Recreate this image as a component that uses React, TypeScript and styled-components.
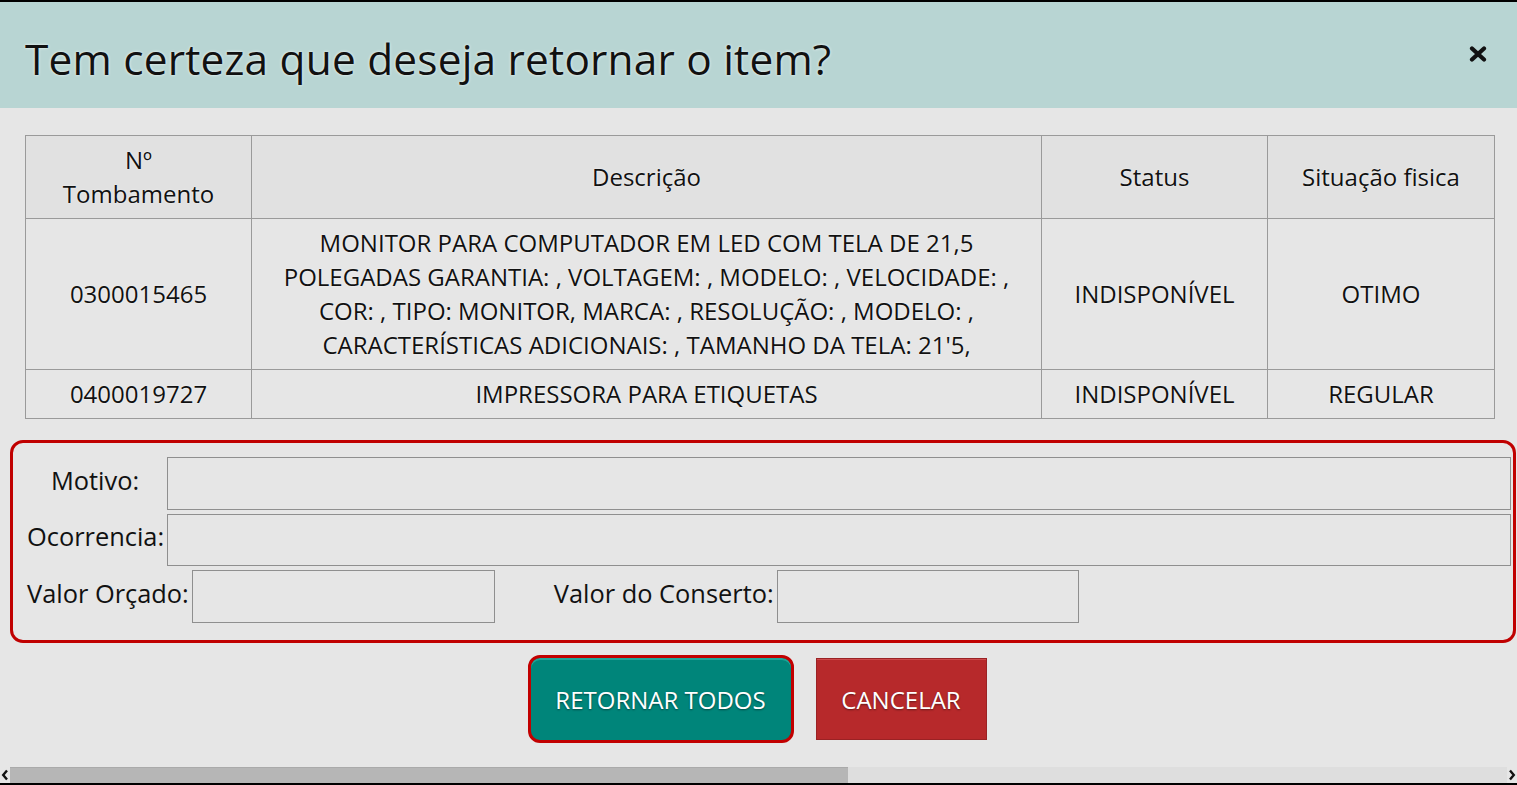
import React from "react";
import styled, { createGlobalStyle } from "styled-components";

const Global = createGlobalStyle`
  html, body { margin: 0; padding: 0; }
  body {
    font-family: "Open Sans", "Noto Sans", "Liberation Sans", sans-serif;
    color: #111;
    background: #e6e6e6;
    overflow: hidden;
  }
  * { box-sizing: border-box; }
`;

const Page = styled.div`
  height: 100vh;
  display: flex;
  flex-direction: column;
  border-top: 2px solid #000;
  border-bottom: 2px solid #000;
  background: #e6e6e6;
`;

const Header = styled.div`
  height: 106px;
  flex: none;
  background: #b8d5d3;
  display: flex;
  align-items: center;
  justify-content: space-between;
  padding: 6px 30px 0 25px;
`;

const Title = styled.h1`
  margin: 0;
  font-size: 42.4px;
  font-weight: 400;
  letter-spacing: 0.2px;
  color: #111;
  text-shadow: 0 0 3px rgba(255, 255, 255, 0.9);
`;

const CloseBtn = styled.button`
  border: 0;
  background: none;
  padding: 0;
  margin-top: -9px;
  width: 18px;
  height: 16px;
  display: flex;
  cursor: pointer;
`;

const Body = styled.div`
  flex: 1;
  display: flex;
  flex-direction: column;
  padding: 27px 1px 0 10px;
`;

const Table = styled.table`
  margin: 0 22px 0 15px;
  border-collapse: collapse;
  table-layout: fixed;
  width: 1469px;
  font-size: 24px;
  line-height: 34px;
`;

const Th = styled.th<{ $w: number }>`
  width: ${(p) => p.$w}px;
  border: 1px solid #9a9a9a;
  background: #e1e1e1;
  font-weight: 400;
  padding: 7px 8px;
  text-align: center;
  vertical-align: middle;
  text-shadow: 0 0 2px rgba(255, 255, 255, 0.8);
`;

const Td = styled.td`
  border: 1px solid #9a9a9a;
  padding: 7px 8px;
  text-align: center;
  vertical-align: middle;
  text-shadow: 0 0 2px rgba(255, 255, 255, 0.8);
`;

const FormBox = styled.div`
  margin-top: 21px;
  border: 3px solid #c00000;
  border-radius: 13px;
  padding: 14px 2px 17px 14px;
  display: flex;
  flex-direction: column;
  gap: 4px;
  font-size: 25.4px;
`;

const WideRow = styled.div`
  display: grid;
  grid-template-columns: 140px 1fr;
  align-items: center;
`;

const CenterLabel = styled.label`
  text-align: center;
  padding: 0 4px 8px 0;
  white-space: nowrap;
`;

const Field = styled.input<{ $w?: number; $h: number }>`
  display: block;
  width: ${(p) => (p.$w ? `${p.$w}px` : "100%")};
  height: ${(p) => p.$h}px;
  border: 1px solid #8f8f8f;
  background: #e6e6e6;
  font: inherit;
  padding: 0 6px;
  outline: none;
`;

const ValueRow = styled.div`
  display: flex;
  align-items: center;
`;

const InlineLabel = styled.label<{ $ml?: number }>`
  margin-left: ${(p) => p.$ml ?? 0}px;
  margin-right: 3px;
  padding-bottom: 8px;
  white-space: nowrap;
`;

const Actions = styled.div`
  display: flex;
  justify-content: center;
  align-items: center;
  gap: 22px;
  margin-top: 12px;
  padding-right: 12px;
`;

const Btn = styled.button<{ $variant: "primary" | "danger" }>`
  font-family: "Open Sans", "Noto Sans", sans-serif;
  font-size: 24px;
  color: #fff;
  text-shadow: 0 1px 2px rgba(0, 0, 0, 0.45);
  cursor: pointer;
  padding: 0;
  ${(p) =>
    p.$variant === "primary"
      ? `
    width: 266px;
    height: 88px;
    background: #00857a;
    border: 3px solid #c20000;
    border-radius: 12px;
    box-shadow: inset 0 2px 0 #1fa69a;
  `
      : `
    width: 171px;
    height: 82px;
    background: #b7292b;
    border: 1px solid #9a2224;
    border-radius: 0;
    box-shadow: inset 0 1px 0 #cd4a4c;
  `}
`;

const Spacer = styled.div`
  flex: 1;
`;

const ScrollBar = styled.div`
  height: 16px;
  flex: none;
  display: flex;
  align-items: stretch;
  background: #dedede;
`;

const Arrow = styled.div`
  width: 10px;
  display: flex;
  align-items: center;
  justify-content: center;
  background: #e6e6e6;
`;

const Thumb = styled.div`
  width: 838px;
  background: #b6b6b6;
  border-top: 1px solid #aaa;
`;

const Track = styled.div`
  flex: 1;
`;

const rows = [
  {
    num: "0300015465",
    desc: "MONITOR PARA COMPUTADOR EM LED COM TELA DE 21,5 POLEGADAS GARANTIA: , VOLTAGEM: , MODELO: , VELOCIDADE: , COR: , TIPO: MONITOR, MARCA: , RESOLUÇÃO: , MODELO: , CARACTERÍSTICAS ADICIONAIS: , TAMANHO DA TELA: 21'5,",
    status: "INDISPONÍVEL",
    sit: "OTIMO",
  },
  {
    num: "0400019727",
    desc: "IMPRESSORA PARA ETIQUETAS",
    status: "INDISPONÍVEL",
    sit: "REGULAR",
  },
];

export default function App() {
  return (
    <>
      <Global />
      <Page>
        <Header>
          <Title>Tem certeza que deseja retornar o item?</Title>
          <CloseBtn aria-label="Fechar">
            <svg width="18" height="16" viewBox="0 0 18 16">
              <path
                d="M3 2.5 L15 13.5 M15 2.5 L3 13.5"
                stroke="#111"
                strokeWidth="4.2"
                strokeLinecap="round"
              />
            </svg>
          </CloseBtn>
        </Header>
        <Body>
          <Table>
            <thead>
              <tr>
                <Th $w={226}>
                  Nº
                  <br />
                  Tombamento
                </Th>
                <Th $w={790}>Descrição</Th>
                <Th $w={226}>Status</Th>
                <Th $w={227}>Situação fisica</Th>
              </tr>
            </thead>
            <tbody>
              {rows.map((r) => (
                <tr key={r.num}>
                  <Td>{r.num}</Td>
                  <Td>{r.desc}</Td>
                  <Td>{r.status}</Td>
                  <Td>{r.sit}</Td>
                </tr>
              ))}
            </tbody>
          </Table>

          <FormBox>
            <WideRow>
              <CenterLabel>Motivo:</CenterLabel>
              <Field $h={53} />
            </WideRow>
            <WideRow>
              <CenterLabel>Ocorrencia:</CenterLabel>
              <Field $h={52} />
            </WideRow>
            <ValueRow>
              <InlineLabel>Valor Orçado:</InlineLabel>
              <Field $w={303} $h={53} />
              <InlineLabel $ml={59}>Valor do Conserto:</InlineLabel>
              <Field $w={302} $h={53} />
            </ValueRow>
          </FormBox>

          <Actions>
            <Btn $variant="primary">RETORNAR TODOS</Btn>
            <Btn $variant="danger">CANCELAR</Btn>
          </Actions>
          <Spacer />
        </Body>
        <ScrollBar>
          <Arrow>
            <svg width="8" height="12" viewBox="0 0 8 12">
              <path d="M6 1.5 L2.2 6 L6 10.5" stroke="#111" strokeWidth="2.4" fill="none" />
            </svg>
          </Arrow>
          <Thumb />
          <Track />
          <Arrow>
            <svg width="8" height="12" viewBox="0 0 8 12">
              <path d="M2 1.5 L5.8 6 L2 10.5" stroke="#111" strokeWidth="2.4" fill="none" />
            </svg>
          </Arrow>
        </ScrollBar>
      </Page>
    </>
  );
}
